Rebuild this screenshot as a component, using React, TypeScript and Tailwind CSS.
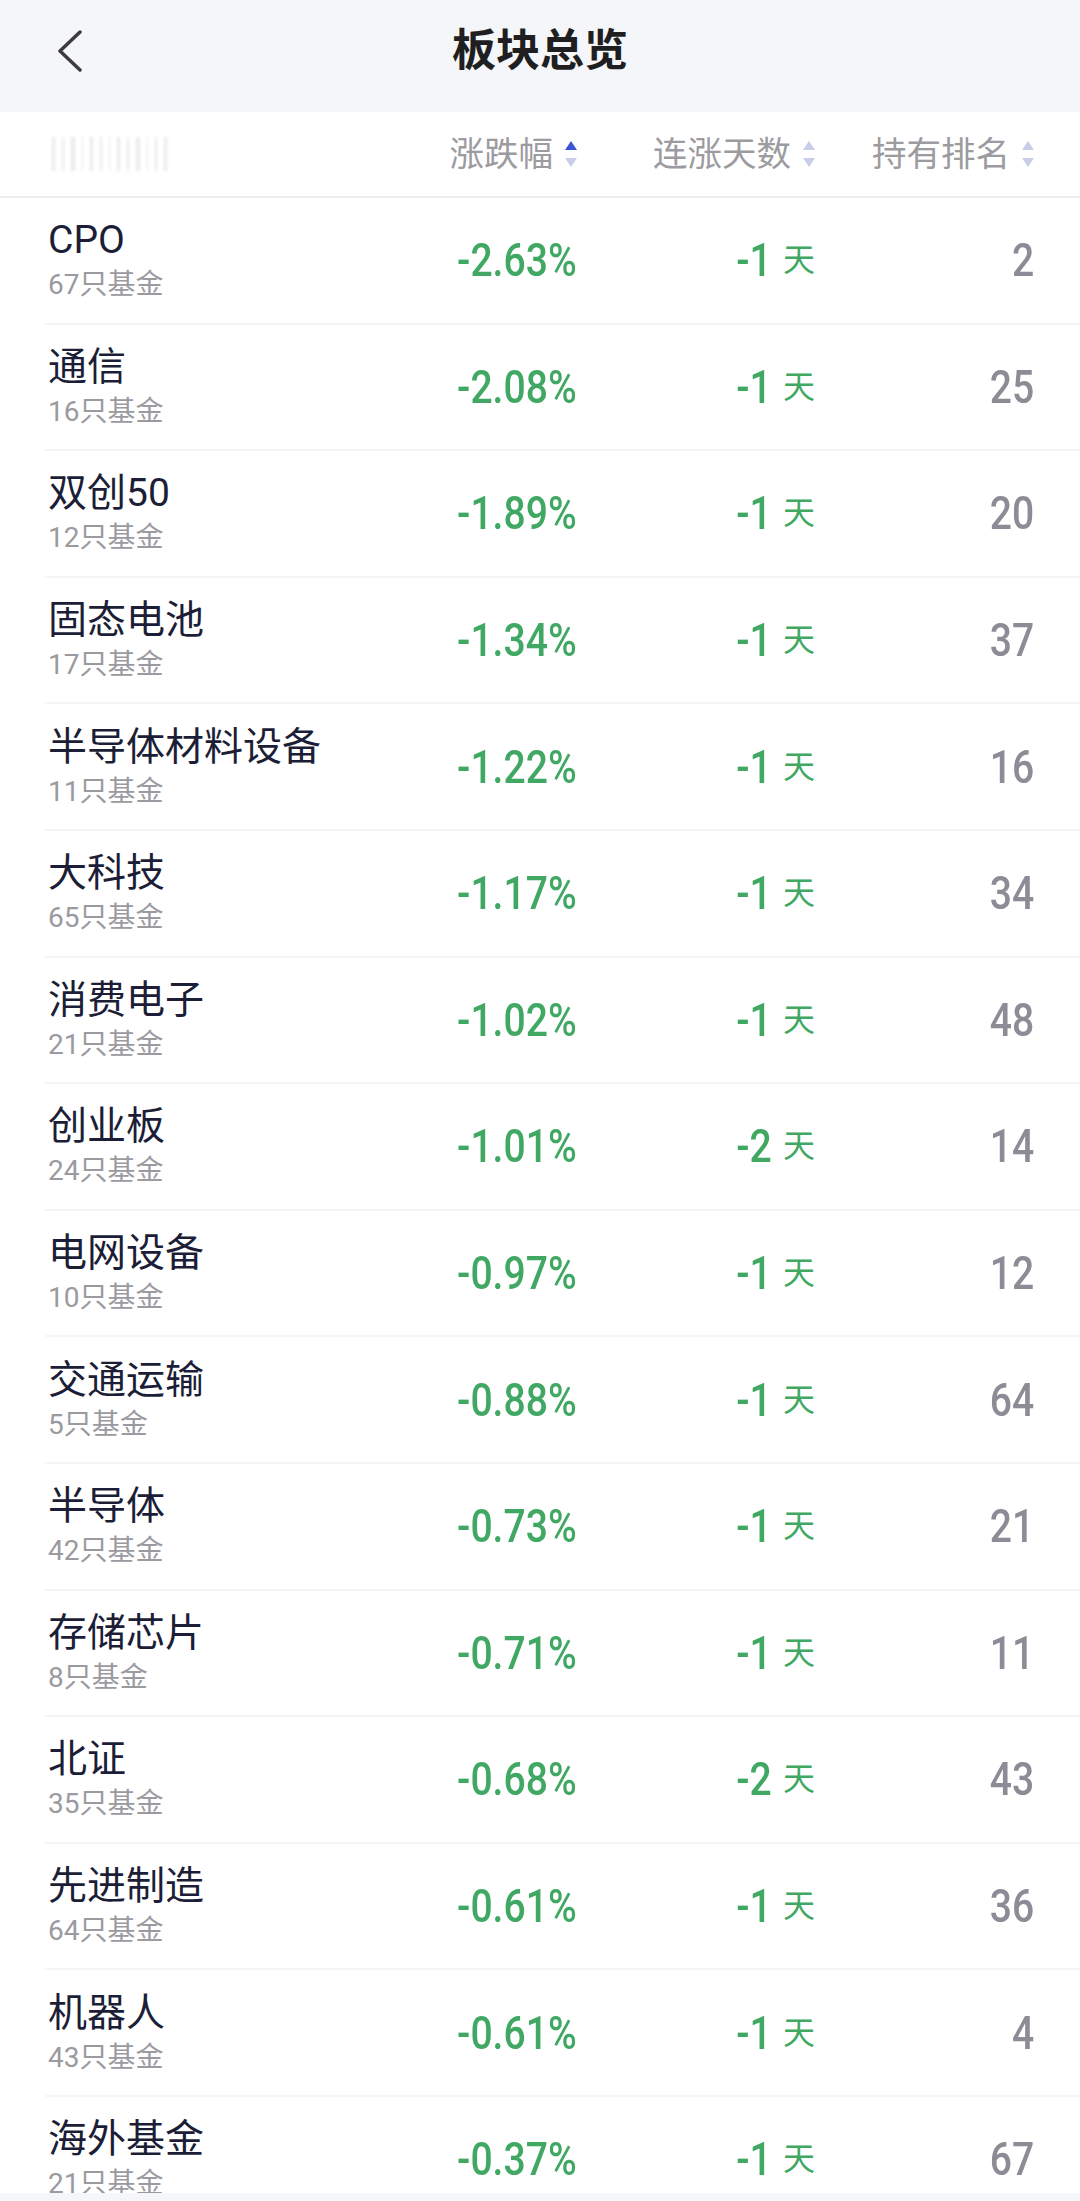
import React from "react"

type Sector = {
  name: string
  funds: number
  change: string
  streak: number
  rank: number
}

const sectors: Sector[] = [
  { name: "CPO", funds: 67, change: "-2.63%", streak: -1, rank: 2 },
  { name: "通信", funds: 16, change: "-2.08%", streak: -1, rank: 25 },
  { name: "双创50", funds: 12, change: "-1.89%", streak: -1, rank: 20 },
  { name: "固态电池", funds: 17, change: "-1.34%", streak: -1, rank: 37 },
  { name: "半导体材料设备", funds: 11, change: "-1.22%", streak: -1, rank: 16 },
  { name: "大科技", funds: 65, change: "-1.17%", streak: -1, rank: 34 },
  { name: "消费电子", funds: 21, change: "-1.02%", streak: -1, rank: 48 },
  { name: "创业板", funds: 24, change: "-1.01%", streak: -2, rank: 14 },
  { name: "电网设备", funds: 10, change: "-0.97%", streak: -1, rank: 12 },
  { name: "交通运输", funds: 5, change: "-0.88%", streak: -1, rank: 64 },
  { name: "半导体", funds: 42, change: "-0.73%", streak: -1, rank: 21 },
  { name: "存储芯片", funds: 8, change: "-0.71%", streak: -1, rank: 11 },
  { name: "北证", funds: 35, change: "-0.68%", streak: -2, rank: 43 },
  { name: "先进制造", funds: 64, change: "-0.61%", streak: -1, rank: 36 },
  { name: "机器人", funds: 43, change: "-0.61%", streak: -1, rank: 4 },
  { name: "海外基金", funds: 21, change: "-0.37%", streak: -1, rank: 67 },
]

const cjk = "font-['Roboto','Noto_Sans_CJK_SC',sans-serif]"

function SortArrows({ active }: { active?: boolean }) {
  return (
    <svg width="12" height="26" viewBox="0 0 12 26" className="shrink-0">
      <path d="M6 0 L12 9 L0 9 Z" fill={active ? "#3b56d4" : "#c9cde8"} />
      <path d="M0 17 L12 17 L6 26 Z" fill="#c9cde8" />
    </svg>
  )
}

function HeaderCell({ label, active, width }: { label: string; active?: boolean; width: string }) {
  return (
    <div className={`${width} flex items-center justify-end gap-[12px]`}>
      <span className="text-[34.5px] leading-none text-[#9b9ba0]">{label}</span>
      <SortArrows active={active} />
    </div>
  )
}

// faded placeholder where the reference shows a blurred label
function BlurredLabel() {
  const bars = [3, 2, 4, 1, 3, 2, 1, 3, 2, 4, 1, 2, 3]
  return (
    <div className="flex h-[34px] w-[122px] items-stretch gap-[7px] blur-[1.5px] opacity-50">
      {bars.map((w, i) => (
        <div key={i} className="bg-[#d4d5da]" style={{ width: w }} />
      ))}
    </div>
  )
}

function Row({ s }: { s: Sector }) {
  return (
    <div className="pl-[45px]">
      <div className="flex h-[126.6px] items-center border-b-2 border-[#f4f5f7] pl-[3px] pr-[46px]">
        <div className="flex flex-1 flex-col">
          <span className="text-[39px] leading-[46px] text-[#1b1e36]">{s.name}</span>
          <span className="mt-[4px] text-[28px] leading-[36px] text-[#9a9aa0]">{s.funds}只基金</span>
        </div>
        <div className="flex w-[180px] justify-end">
          <span className="origin-right scale-x-[0.85] font-['Roboto',sans-serif] text-[46px] font-medium leading-none text-[#41a864]">
            {s.change}
          </span>
        </div>
        <div className="flex w-[238px] items-center justify-end text-[#41a864]">
          <span className="origin-right scale-x-[0.85] font-['Roboto',sans-serif] text-[46px] font-medium leading-none">
            {s.streak}
          </span>
          <span className="ml-[11px] text-[32px] leading-none">天</span>
        </div>
        <div className="flex w-[219px] justify-end">
          <span className="origin-right scale-x-[0.85] font-['Roboto',sans-serif] text-[46px] font-medium leading-none text-[#8c8c96]">
            {s.rank}
          </span>
        </div>
      </div>
    </div>
  )
}

export default function App() {
  return (
    <div className={`flex h-[2201px] w-[1080px] flex-col overflow-hidden bg-white ${cjk}`}>
      <header className="grid h-[112px] shrink-0 grid-cols-[1fr_auto_1fr] items-center bg-[#f5f6fa] pb-[10px]">
        <div className="pl-[56px]">
          <svg width="28" height="42" viewBox="0 0 28 42" fill="none">
            <path d="M24 2 L4 21 L24 40" stroke="#3c3c40" strokeWidth="3.5" strokeLinecap="round" strokeLinejoin="round" />
          </svg>
        </div>
        <h1 className="text-[44px] font-bold leading-none text-[#1f1f22]">板块总览</h1>
        <div />
      </header>

      <div className="flex h-[86px] shrink-0 items-center border-b-2 border-[#eceef2] pl-[52px] pr-[46px]">
        <div className="flex-1">
          <BlurredLabel />
        </div>
        <HeaderCell label="涨跌幅" active width="w-[180px]" />
        <HeaderCell label="连涨天数" width="w-[238px]" />
        <HeaderCell label="持有排名" width="w-[219px]" />
      </div>

      <div className="flex-1 overflow-hidden">
        {sectors.map((s) => (
          <Row key={s.name} s={s} />
        ))}
      </div>

      <div className="h-[8px] shrink-0 bg-[#f5f6f8]" />
    </div>
  )
}
